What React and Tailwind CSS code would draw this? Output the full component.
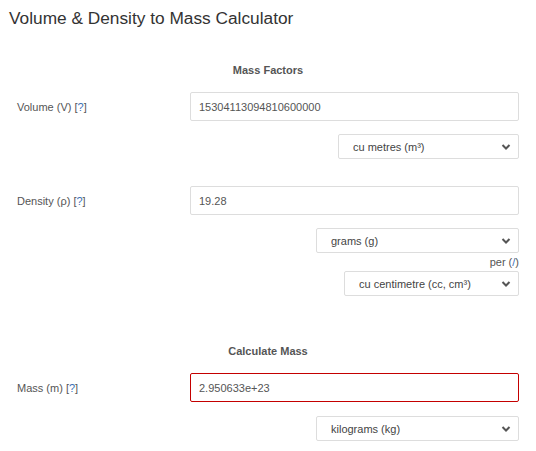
import React from 'react';

const Chevron = () => (
  <svg
    className="pointer-events-none absolute right-[8px] top-1/2 -translate-y-1/2"
    width="10"
    height="7"
    viewBox="0 0 10 7"
    fill="none"
  >
    <polyline points="1.5,1.5 5,5 8.5,1.5" stroke="#555" strokeWidth="2" />
  </svg>
);

const UnitSelect = ({ value, width }) => (
  <div className={`relative h-[25px] ${width}`}>
    <select
      defaultValue={value}
      className="block h-[25px] w-full appearance-none rounded-[2px] border border-[#ddd] bg-white pl-[14px] text-[11px] leading-[14px] text-[#444] outline-none"
    >
      <option>{value}</option>
    </select>
    <Chevron />
  </div>
);

const Help = () => (
  <span>
    [<span className="text-[#3b6fb6]">?</span>]
  </span>
);

const Field = ({ label, value, error }) => (
  <div className="flex h-[29px] items-center">
    <div className="w-[173px] text-[11px] leading-[14px] text-[#555]">
      {label} <Help />
    </div>
    <input
      readOnly
      value={value}
      className={`block h-[29px] flex-1 rounded-[2px] border bg-white pl-[8px] text-[11px] text-[#555] outline-none ${
        error ? 'border-[#c40000]' : 'border-[#ddd]'
      }`}
    />
  </div>
);

export default function App() {
  return (
    <div className="min-h-[451px] w-[536px] bg-white font-['Liberation_Sans',Arial,sans-serif]">
      <h1 className="pl-[9px] pt-[8px] text-[17.3px] leading-[20px] text-[#333]">
        Volume &amp; Density to Mass Calculator
      </h1>

      <div className="px-[17px]">
        {/* Mass Factors */}
        <div className="mt-[35px] text-center text-[11px] font-bold leading-[14px] text-[#555]">
          Mass Factors
        </div>

        <div className="mt-[15px]">
          <Field label="Volume (V)" value="15304113094810600000" />
        </div>
        <div className="mt-[13px] flex justify-end">
          <UnitSelect value="cu metres (m³)" width="w-[181px]" />
        </div>

        <div className="mt-[27px]">
          <Field label="Density (ρ)" value="19.28" />
        </div>
        <div className="mt-[13px] flex justify-end">
          <UnitSelect value="grams (g)" width="w-[203px]" />
        </div>
        <div className="mt-[2px] text-right text-[11px] leading-[14px] text-[#555]">
          per (<span className="text-[#3b6fb6]">/</span>)
        </div>
        <div className="mt-[2px] flex justify-end">
          <UnitSelect value="cu centimetre (cc, cm³)" width="w-[175px]" />
        </div>

        {/* Calculate Mass */}
        <div className="mt-[48px] text-center text-[11px] font-bold leading-[14px] text-[#555]">
          Calculate Mass
        </div>

        <div className="mt-[15px]">
          <Field label="Mass (m)" value="2.950633e+23" error />
        </div>
        <div className="mt-[14px] flex justify-end">
          <UnitSelect value="kilograms (kg)" width="w-[203px]" />
        </div>
      </div>
    </div>
  );
}
